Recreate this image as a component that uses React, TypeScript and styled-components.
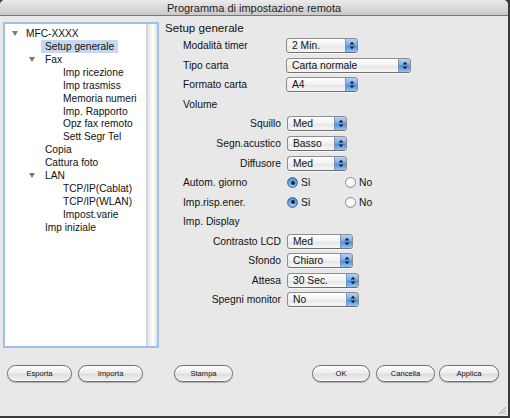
import React from 'react';
import styled, { createGlobalStyle } from 'styled-components';

const Global = createGlobalStyle`
  html, body { margin: 0; padding: 0; background: #3a3a3a; }
  body {
    width: 510px; height: 418px; overflow: hidden;
    font-family: "Liberation Sans", Arial, sans-serif;
    color: #111;
  }
`;

const Window = styled.div`
  position: relative;
  width: 508px;
  height: 416px;
  background: #e8e8e8;
  border-radius: 5px 5px 0 0;
  overflow: hidden;
  display: flex;
  flex-direction: column;
`;

const TitleBar = styled.div`
  height: 15px;
  flex: none;
  border-bottom: 1px solid #777;
  background: linear-gradient(#ebebeb, #c9c9c9);
  display: flex;
  align-items: center;
  justify-content: center;
  font-size: 11px;
  color: #1e1e1e;
`;

const Body = styled.div`
  flex: 1;
  display: flex;
  flex-direction: column;
  padding: 6px 9px 0 3px;
`;

const Main = styled.div`
  display: flex;
  height: 326px;
`;

const TreePanel = styled.div`
  width: 156px;
  height: 326px;
  box-sizing: border-box;
  border: 2px solid #9dc1ed;
  background: #fff;
  display: flex;
`;

const TreeList = styled.div`
  flex: 1;
  padding-top: 3px;
  font-size: 10.2px;
`;

const Scrollbar = styled.div`
  width: 10px;
  border-left: 1px solid #d2d2d2;
  background: linear-gradient(90deg, #dcdcdc, #f7f7f7 45%, #ffffff 60%, #e2e2e2);
`;

const TreeRow = styled.div<{ $pad: number }>`
  height: 12.93px;
  display: flex;
  align-items: center;
  padding-left: ${p => p.$pad}px;
  white-space: nowrap;
`;

const Twisty = styled.span<{ $gap: number }>`
  display: inline-block;
  width: 0;
  height: 0;
  border-left: 3px solid transparent;
  border-right: 3px solid transparent;
  border-top: 5px solid #7a7a7a;
  margin-right: ${p => p.$gap}px;
`;

const TreeLabel = styled.span<{ $selected?: boolean }>`
  display: flex;
  align-items: center;
  height: 13px;
  padding: 0 4px;
  margin-left: -4px;
  background: ${p => (p.$selected ? '#c5d8f0' : 'transparent')};
`;

const Settings = styled.div`
  margin-left: 6px;
  flex: 1;
  display: flex;
  flex-direction: column;
`;

const Header = styled.div`
  height: 12px;
  line-height: 12px;
  margin-bottom: 2px;
  font-size: 11.6px;
`;

const Form = styled.div`
  display: grid;
  grid-template-columns: 98px 1fr;
  grid-auto-rows: 19.55px;
  column-gap: 5px;
  padding-left: 18px;
  font-size: 10.3px;
`;

const Label = styled.div<{ $align: 'left' | 'right' }>`
  display: flex;
  align-items: center;
  justify-content: ${p => (p.$align === 'right' ? 'flex-end' : 'flex-start')};
  white-space: nowrap;
`;

const Heading = styled.div`
  grid-column: 1 / span 2;
  display: flex;
  align-items: center;
`;

const Cell = styled.div<{ $shift: number }>`
  display: flex;
  align-items: center;
  padding-left: ${p => p.$shift}px;
`;

const SelectBox = styled.div<{ $w: number }>`
  width: ${p => p.$w}px;
  height: 15px;
  box-sizing: border-box;
  border: 1px solid #8d8d8d;
  border-bottom-color: #6f6f6f;
  border-radius: 3.5px;
  background: linear-gradient(#ffffff, #f1f1f1 50%, #e6e6e6 55%, #f7f7f7);
  display: flex;
  overflow: hidden;
  box-shadow: 0 1px 0 rgba(255, 255, 255, 0.6);
`;

const SelectText = styled.span`
  flex: 1;
  padding-left: 5px;
  display: flex;
  align-items: center;
  white-space: nowrap;
`;

const Stepper = styled.span`
  width: 11px;
  border-left: 1px solid #7896bd;
  background: linear-gradient(#b4d2f4, #77acea 45%, #4c8ee0 55%, #93c4f3);
  display: flex;
  align-items: center;
  justify-content: center;
`;

const RadioGroup = styled.div`
  display: flex;
  align-items: center;
`;

const RadioOption = styled.div<{ $w?: number }>`
  display: flex;
  align-items: center;
  gap: 3px;
  width: ${p => (p.$w ? `${p.$w}px` : 'auto')};
`;

const RadioCircle = styled.span<{ $on?: boolean }>`
  width: 11px;
  height: 11px;
  box-sizing: border-box;
  border-radius: 50%;
  border: 1px solid ${p => (p.$on ? '#4a6d9c' : '#8c8c8c')};
  background: ${p =>
    p.$on
      ? 'radial-gradient(circle at 50% 70%, #a9d0f7, #5d99e0 60%, #3e78c8)'
      : 'linear-gradient(#f4f4f4, #ffffff 60%, #e9e9e9)'};
  display: flex;
  align-items: center;
  justify-content: center;
  &::after {
    content: '';
    display: ${p => (p.$on ? 'block' : 'none')};
    width: 4px;
    height: 4px;
    border-radius: 50%;
    background: #14213a;
  }
`;

const Footer = styled.div`
  display: flex;
  margin-top: 17px;
  padding-left: 4px;
`;

const Button = styled.button<{ $w: number; $ml: number }>`
  width: ${p => p.$w}px;
  margin-left: ${p => p.$ml}px;
  height: 17px;
  padding: 0;
  box-sizing: border-box;
  border: 1px solid #6e6e6e;
  border-radius: 9px;
  background: linear-gradient(#fdfdfd, #eeeeee 45%, #dedede 55%, #f2f2f2);
  box-shadow: 0 1px 1px rgba(0, 0, 0, 0.25), inset 0 0 0 1px rgba(255, 255, 255, 0.6);
  font-family: "Liberation Sans", Arial, sans-serif;
  font-size: 7.6px;
  color: #111;
  display: flex;
  align-items: center;
  justify-content: center;
`;

const Grip = styled.svg`
  position: absolute;
  right: 1px;
  bottom: 1px;
`;

const Arrows = () => (
  <svg width="6" height="9" viewBox="0 0 6 9">
    <path d="M3 0.8 L5.4 3.6 L0.6 3.6 Z" fill="#1a1a1a" />
    <path d="M3 8.2 L5.4 5.4 L0.6 5.4 Z" fill="#1a1a1a" />
  </svg>
);

const Select = ({ value, width }: { value: string; width: number }) => (
  <SelectBox $w={width}>
    <SelectText>{value}</SelectText>
    <Stepper>
      <Arrows />
    </Stepper>
  </SelectBox>
);

type TreeItem = { text: string; pad: number; twisty?: number; selected?: boolean };

const tree: TreeItem[] = [
  { text: 'MFC-XXXX', pad: 7, twisty: 8 },
  { text: 'Setup generale', pad: 40, selected: true },
  { text: 'Fax', pad: 24, twisty: 10 },
  { text: 'Imp ricezione', pad: 58 },
  { text: 'Imp trasmiss', pad: 58 },
  { text: 'Memoria numeri', pad: 58 },
  { text: 'Imp. Rapporto', pad: 58 },
  { text: 'Opz fax remoto', pad: 58 },
  { text: 'Sett Segr Tel', pad: 58 },
  { text: 'Copia', pad: 40 },
  { text: 'Cattura foto', pad: 40 },
  { text: 'LAN', pad: 24, twisty: 10 },
  { text: 'TCP/IP(Cablat)', pad: 58 },
  { text: 'TCP/IP(WLAN)', pad: 58 },
  { text: 'Impost.varie', pad: 58 },
  { text: 'Imp iniziale', pad: 40 },
];

type FormRow =
  | { kind: 'select'; label: string; align: 'left' | 'right'; value: string; width: number }
  | { kind: 'heading'; label: string }
  | { kind: 'radio'; label: string };

const rows: FormRow[] = [
  { kind: 'select', label: 'Modalità timer', align: 'left', value: '2 Min.', width: 72 },
  { kind: 'select', label: 'Tipo carta', align: 'left', value: 'Carta normale', width: 125 },
  { kind: 'select', label: 'Formato carta', align: 'left', value: 'A4', width: 72 },
  { kind: 'heading', label: 'Volume' },
  { kind: 'select', label: 'Squillo', align: 'right', value: 'Med', width: 60 },
  { kind: 'select', label: 'Segn.acustico', align: 'right', value: 'Basso', width: 60 },
  { kind: 'select', label: 'Diffusore', align: 'right', value: 'Med', width: 60 },
  { kind: 'radio', label: 'Autom. giorno' },
  { kind: 'radio', label: 'Imp.risp.ener.' },
  { kind: 'heading', label: 'Imp. Display' },
  { kind: 'select', label: 'Contrasto LCD', align: 'right', value: 'Med', width: 66 },
  { kind: 'select', label: 'Sfondo', align: 'right', value: 'Chiaro', width: 66 },
  { kind: 'select', label: 'Attesa', align: 'right', value: '30 Sec.', width: 72 },
  { kind: 'select', label: 'Spegni monitor', align: 'right', value: 'No', width: 72 },
];

export default function App() {
  return (
    <>
      <Global />
      <Window>
        <TitleBar>Programma di impostazione remota</TitleBar>
        <Body>
          <Main>
            <TreePanel>
              <TreeList>
                {tree.map(item => (
                  <TreeRow key={item.text} $pad={item.pad}>
                    {item.twisty !== undefined && <Twisty $gap={item.twisty} />}
                    <TreeLabel $selected={item.selected}>{item.text}</TreeLabel>
                  </TreeRow>
                ))}
              </TreeList>
              <Scrollbar />
            </TreePanel>
            <Settings>
              <Header>Setup generale</Header>
              <Form>
                {rows.map(row => {
                  if (row.kind === 'heading') {
                    return <Heading key={row.label}>{row.label}</Heading>;
                  }
                  if (row.kind === 'radio') {
                    return (
                      <React.Fragment key={row.label}>
                        <Label $align="left">{row.label}</Label>
                        <Cell $shift={1}>
                          <RadioGroup>
                            <RadioOption $w={58}>
                              <RadioCircle $on />
                              <span>Sì</span>
                            </RadioOption>
                            <RadioOption>
                              <RadioCircle />
                              <span>No</span>
                            </RadioOption>
                          </RadioGroup>
                        </Cell>
                      </React.Fragment>
                    );
                  }
                  return (
                    <React.Fragment key={row.label}>
                      <Label $align={row.align}>{row.label}</Label>
                      <Cell $shift={row.align === 'right' ? 1 : 0}>
                        <Select value={row.value} width={row.width} />
                      </Cell>
                    </React.Fragment>
                  );
                })}
              </Form>
            </Settings>
          </Main>
          <Footer>
            <Button $w={65} $ml={0}>Esporta</Button>
            <Button $w={65} $ml={6}>Importa</Button>
            <Button $w={59} $ml={31}>Stampa</Button>
            <Button $w={58} $ml={79}>OK</Button>
            <Button $w={59} $ml={6}>Cancella</Button>
            <Button $w={60} $ml={4}>Applica</Button>
          </Footer>
        </Body>
        <Grip width="9" height="9" viewBox="0 0 9 9">
          <path d="M8 1 L1 8 M8 4 L4 8 M8 7 L7 8" stroke="#9a9a9a" strokeWidth="0.9" />
        </Grip>
      </Window>
    </>
  );
}
